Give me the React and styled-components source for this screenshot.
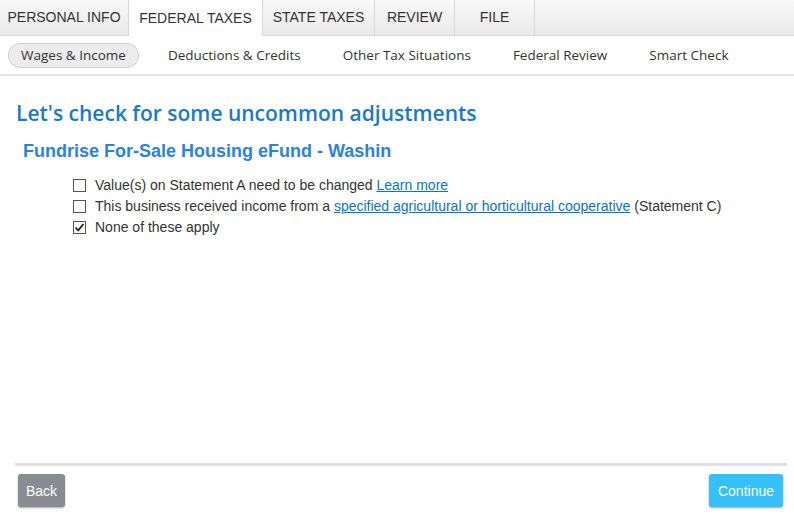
import styled, { createGlobalStyle } from "styled-components";

const Global = createGlobalStyle`
  html, body {
    margin: 0;
    padding: 0;
    background: #fff;
  }
  body {
    font-family: "Liberation Sans", Arial, sans-serif;
    color: #333;
  }
`;

const Page = styled.div`
  width: 794px;
  height: 521px;
  display: flex;
  flex-direction: column;
  overflow: hidden;
`;

const TabBar = styled.div`
  display: flex;
  height: 36px;
  background: linear-gradient(#f8f8f8, #e9e9e9);
  border-bottom: 1px solid #d6d6d6;
  box-sizing: border-box;
  flex: none;
`;

const Tab = styled.div`
  width: ${(p) => p.w}px;
  box-sizing: border-box;
  display: flex;
  align-items: center;
  justify-content: center;
  font-size: 14px;
  color: #333;
  border-right: 1px solid #d8d8d8;
  background: ${(p) => (p.active ? "#fff" : "transparent")};
  margin-bottom: ${(p) => (p.active ? "-1px" : "0")};
  padding-bottom: 1px;
`;

const SubNav = styled.div`
  display: flex;
  align-items: center;
  gap: 16px;
  height: 38px;
  padding: 0 8px;
  border-bottom: 2px solid #e2e2e2;
  flex: none;
`;

const SubItem = styled.div`
  font-family: "Open Sans", sans-serif;
  font-size: 13.5px;
  white-space: nowrap;
  flex: none;
  color: #333;
  padding: 2px 12px 3px;
  border-radius: 12px;
  border: 1px solid ${(p) => (p.active ? "#cfcfcf" : "transparent")};
  background: ${(p) => (p.active ? "#ececec" : "transparent")};
`;

const Main = styled.div`
  flex: 1;
  padding: 0 16px;
  display: flex;
  flex-direction: column;
`;

const Heading = styled.h1`
  margin: 23px 0 0;
  font-family: "Open Sans", sans-serif;
  font-weight: 600;
  font-size: 21px;
  color: #1b7ac6;
`;

const SubHeading = styled.h2`
  margin: 14px 0 0 7px;
  font-size: 18px;
  font-weight: bold;
  color: #2d82de;
`;

const Options = styled.div`
  margin: 15px 0 0 57px;
  display: flex;
  flex-direction: column;
  gap: 5px;
`;

const Option = styled.label`
  display: flex;
  align-items: center;
  font-size: 14px;
  color: #333;
  height: 16px;
  white-space: pre;
`;

const Box = styled.span`
  width: 13px;
  height: 13px;
  box-sizing: border-box;
  border: 1px solid #555;
  background: #fff;
  margin-right: 9px;
  display: inline-flex;
  align-items: center;
  justify-content: center;
  flex: none;
`;

const Link = styled.a`
  color: #0a74c4;
  text-decoration: underline;
`;

const Spacer = styled.div`
  flex: 1;
`;

const Footer = styled.div`
  border-top: 3px solid #e0e0e0;
  margin: 0 -9px 0 -1px;
  padding: 8px 4px 14px 3px;
  display: flex;
  justify-content: space-between;
`;

const Button = styled.button`
  height: 33px;
  padding: 0 ${(p) => p.pad}px;
  border: none;
  border-radius: 3px;
  font-family: "Liberation Sans", Arial, sans-serif;
  font-size: 14px;
  color: #fff;
  background: ${(p) => p.bg};
  box-shadow: 0 1px 2px rgba(0, 0, 0, 0.35);
`;

const Check = () => (
  <svg width="11" height="11" viewBox="0 0 11 11">
    <path d="M1.5 5.5 L4.2 8.3 L9.5 2" fill="none" stroke="#222" strokeWidth="1.8" />
  </svg>
);

const tabs = [
  ["PERSONAL INFO", 129],
  ["FEDERAL TAXES", 134, true],
  ["STATE TAXES", 112],
  ["REVIEW", 80],
  ["FILE", 80],
];

const subs = [
  ["Wages & Income", true],
  ["Deductions & Credits"],
  ["Other Tax Situations"],
  ["Federal Review"],
  ["Smart Check"],
];

export default function App() {
  return (
    <Page>
      <Global />
      <TabBar>
        {tabs.map(([t, w, a]) => (
          <Tab key={t} w={w} active={a}>
            {t}
          </Tab>
        ))}
      </TabBar>
      <SubNav>
        {subs.map(([t, a]) => (
          <SubItem key={t} active={a}>
            {t}
          </SubItem>
        ))}
      </SubNav>
      <Main>
        <Heading>Let's check for some uncommon adjustments</Heading>
        <SubHeading>Fundrise For-Sale Housing eFund - Washin</SubHeading>
        <Options>
          <Option>
            <Box />
            {"Value(s) on Statement A need to be changed "}
            <Link>Learn more</Link>
          </Option>
          <Option>
            <Box />
            {"This business received income from a "}
            <Link>specified agricultural or horticultural cooperative</Link>
            {" (Statement C)"}
          </Option>
          <Option>
            <Box>
              <Check />
            </Box>
            None of these apply
          </Option>
        </Options>
        <Spacer />
        <Footer>
          <Button bg="#8a8c93" pad={8}>
            Back
          </Button>
          <Button bg="#35c0fa" pad={9}>
            Continue
          </Button>
        </Footer>
      </Main>
    </Page>
  );
}
